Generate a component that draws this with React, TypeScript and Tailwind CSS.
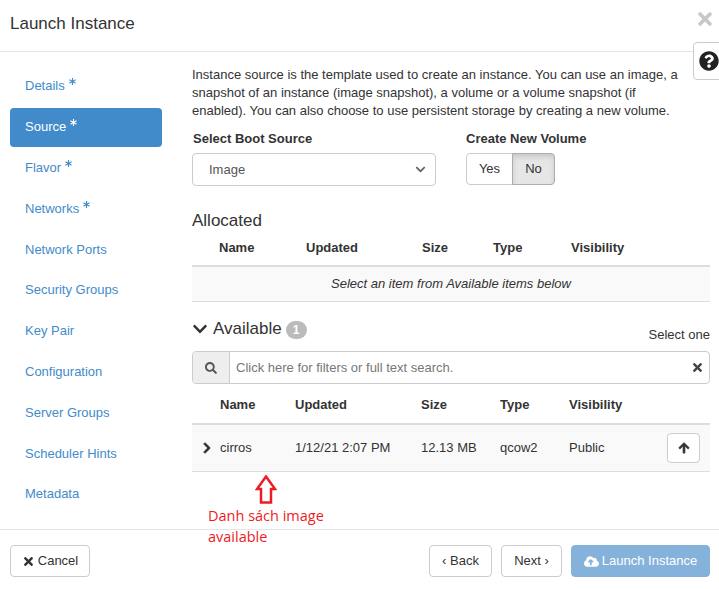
import {
  FaArrowUp,
  FaAsterisk,
  FaChevronDown,
  FaChevronRight,
  FaCloudUploadAlt,
  FaQuestionCircle,
  FaSearch,
  FaTimes,
} from "react-icons/fa";

const steps = [
  { label: "Details", required: true },
  { label: "Source", required: true, active: true },
  { label: "Flavor", required: true },
  { label: "Networks", required: true },
  { label: "Network Ports" },
  { label: "Security Groups" },
  { label: "Key Pair" },
  { label: "Configuration" },
  { label: "Server Groups" },
  { label: "Scheduler Hints" },
  { label: "Metadata" },
];

function Sidebar() {
  return (
    <nav className="w-[182px] ml-[10px] shrink-0 pt-[15px] flex flex-col gap-[2px]">
      {steps.map((s) => (
        <div
          key={s.label}
          className={
            s.active
              ? "w-[152px] h-[38.8px] rounded bg-[#428bca] text-white pl-[15px] flex items-center"
              : "w-[152px] h-[38.8px] rounded text-[#428bca] pl-[15px] flex items-center"
          }
        >
          <span>{s.label}</span>
          {s.required && <FaAsterisk className="text-[7px] ml-[4px] mb-[9px]" />}
        </div>
      ))}
    </nav>
  );
}

function AllocatedTable() {
  return (
    <div>
      <div className="grid grid-cols-[27px_87px_116px_71px_78px_1fr] h-[31px] pb-[2px] items-center font-bold border-b-2 border-[#ddd] box-content">
        <span />
        <span>Name</span>
        <span>Updated</span>
        <span>Size</span>
        <span>Type</span>
        <span>Visibility</span>
      </div>
      <div className="h-[34px] bg-[#f9f9f9] border-b border-[#ddd] flex items-center justify-center italic box-content">
        Select an item from Available items below
      </div>
    </div>
  );
}

function AvailableTable() {
  return (
    <div>
      <div className="grid grid-cols-[28px_75px_126px_79px_69px_1fr] h-[37px] pt-[2px] items-center font-bold border-b-2 border-[#ddd] box-content">
        <span />
        <span>Name</span>
        <span>Updated</span>
        <span>Size</span>
        <span>Type</span>
        <span>Visibility</span>
      </div>
      <div className="grid grid-cols-[28px_75px_126px_79px_69px_1fr] h-[46px] items-center bg-[#f9f9f9] border-b border-[#ddd] box-content">
        <span className="pl-[9px]">
          <FaChevronRight className="text-[12px] stroke-[40]" />
        </span>
        <span>cirros</span>
        <span>1/12/21 2:07 PM</span>
        <span>12.13 MB</span>
        <span>qcow2</span>
        <div className="flex items-center justify-between pr-[10px]">
          <span>Public</span>
          <button className="w-[33px] h-[30px] bg-white border border-[#ccc] rounded flex items-center justify-center">
            <FaArrowUp className="text-[12px] stroke-[30]" />
          </button>
        </div>
      </div>
    </div>
  );
}

function Main() {
  return (
    <main className="w-[518px] pt-[14px]">
      <p className="leading-[18px]">
        Instance source is the template used to create an instance. You can use an image, a
        <br />
        snapshot of an instance (image snapshot), a volume or a volume snapshot (if
        <br />
        enabled). You can also choose to use persistent storage by creating a new volume.
      </p>

      <div className="flex mt-[9px]">
        <div className="w-[274px]">
          <label className="block font-bold leading-5 pl-[1px]">Select Boot Source</label>
          <div className="mt-[4px] w-[244px] h-[33px] border border-[#ccc] rounded flex items-center justify-between pl-[16px] pr-[9px] text-[#555]">
            <span>Image</span>
            <FaChevronDown className="text-[11px] text-[#666]" />
          </div>
        </div>
        <div>
          <label className="block font-bold leading-5">Create New Volume</label>
          <div className="mt-[4px] flex h-[32px]">
            <span className="w-[47px] border border-[#ccc] rounded-l flex items-center justify-center">
              Yes
            </span>
            <span className="w-[43px] -ml-px border border-[#adadad] bg-[#e6e6e6] rounded-r flex items-center justify-center shadow-[inset_0_3px_5px_rgba(0,0,0,0.125)]">
              No
            </span>
          </div>
        </div>
      </div>

      <h3 className="text-[17px] leading-5 mt-[25px]">Allocated</h3>
      <div className="mt-[1px]">
        <AllocatedTable />
      </div>

      <div className="flex items-start justify-between mt-[17px] h-[26px]">
        <div className="flex items-center">
          <FaChevronDown className="text-[16px] mr-[5px]" />
          <span className="text-[17px] leading-5">Available</span>
          <span className="ml-[4px] mt-[1px] w-[21px] h-[18px] rounded-[10px] bg-[#bbb] text-white text-[12px] font-bold flex items-center justify-center">
            1
          </span>
        </div>
        <span className="mt-[6px]">Select one</span>
      </div>

      <div className="mt-[6px] h-[33px] flex border border-[#ccc] rounded">
        <span className="w-[37px] bg-[#eee] border-r border-[#ccc] rounded-l flex items-center justify-center text-[#555]">
          <FaSearch className="text-[12px]" />
        </span>
        <span className="flex-1 pl-[6px] flex items-center text-[#777]">
          Click here for filters or full text search.
        </span>
        <span className="w-[18px] flex items-center text-[#444]">
          <FaTimes className="text-[13px]" />
        </span>
      </div>

      <AvailableTable />
    </main>
  );
}

function Footer() {
  const btn = "h-[32px] border border-[#ccc] rounded flex items-center justify-center";
  return (
    <footer className="h-[60px] border-t border-[#e5e5e5] pl-[10px] pr-[9px] pt-[15px] flex justify-between">
      <button className={`${btn} w-[80px]`}>
        <FaTimes className="text-[13px] mr-[3px]" />
        Cancel
      </button>
      <div className="flex">
        <button className={`${btn} w-[63px]`}>‹ Back</button>
        <button className={`${btn} w-[61px] ml-[9px]`}>Next ›</button>
        <button className="h-[32px] w-[139px] ml-[9px] rounded bg-[#85b2da] border border-[#85b2da] text-white flex items-center justify-center">
          <FaCloudUploadAlt className="text-[15px] mr-[3px]" />
          Launch Instance
        </button>
      </div>
    </footer>
  );
}

export default function App() {
  return (
    <div className="relative w-[719px] h-[589px] overflow-hidden bg-white text-[13px] leading-5 text-[#333] font-['Liberation_Sans',Arial,sans-serif]">
      <header className="h-[52px] border-b border-[#e5e5e5] pl-[10px] pt-[14px]">
        <h1 className="text-[17px] leading-5">Launch Instance</h1>
      </header>

      <FaTimes className="absolute top-[9px] left-[695px] text-[20px] text-[#c8c8c8]" />
      <div className="absolute top-[42px] left-[693px] w-[30px] h-[38px] bg-white border border-[#ccc] rounded-l flex items-center pl-[5px]">
        <FaQuestionCircle className="text-[20px] text-[#222]" />
      </div>

      <div className="flex h-[477px]">
        <Sidebar />
        <Main />
      </div>

      <Footer />

      {/* annotation drawn on the screenshot */}
      <svg className="absolute left-[255px] top-[475px]" width="22" height="29" viewBox="0 0 22 29">
        <path d="M11 1.5 L20 14 H16 V27.5 H6 V14 H2 Z" fill="none" stroke="#ed1c24" strokeWidth="2.5" />
      </svg>
      <div className="absolute left-[208px] top-[505px] w-[130px] text-[14.5px] leading-[21px] text-[#ed1c24] font-['Open_Sans',sans-serif]">
        Danh sách image available
      </div>
    </div>
  );
}
